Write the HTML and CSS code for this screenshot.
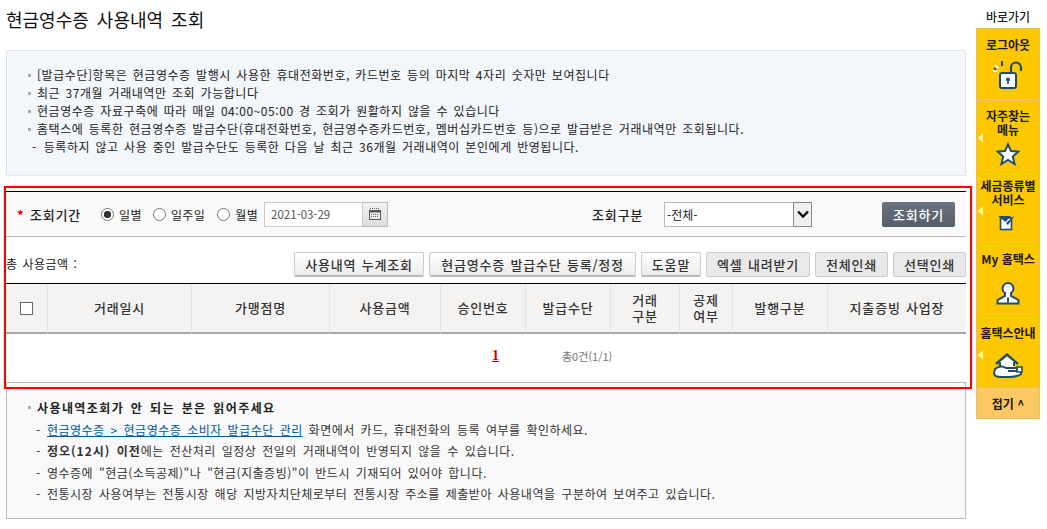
FILE: index.html
```html
<!DOCTYPE html>
<html lang="ko">
<head>
<meta charset="utf-8">
<title>현금영수증 사용내역 조회</title>
<link rel="stylesheet" href="styles.css">
</head>
<body>
<div class="page">
  <main class="main">
    <h1 class="title">현금영수증 사용내역 조회</h1>
    <section class="info">
      <ul class="bullets">
        <li>[발급수단]항목은 현금영수증 발행시 사용한 휴대전화번호, 카드번호 등의 마지막 4자리 숫자만 보여집니다</li>
        <li>최근 37개월 거래내역만 조회 가능합니다</li>
        <li>현금영수증 자료구축에 따라 매일 04:00~05:00 경 조회가 원활하지 않을 수 있습니다</li>
        <li>홈택스에 등록한 현금영수증 발급수단(휴대전화번호, 현금영수증카드번호, 멤버십카드번호 등)으로 발급받은 거래내역만 조회됩니다.</li>
      </ul>
      <p class="info-sub"><span>-</span><span>등록하지 않고 사용 중인 발급수단도 등록한 다음 날 최근 36개월 거래내역이 본인에게 반영됩니다.</span></p>
    </section>

    <form class="search">
      <span class="star">*</span>
      <span class="label period-label">조회기간</span>
      <label class="radio"><input type="radio" name="period" checked>일별</label>
      <label class="radio"><input type="radio" name="period">일주일</label>
      <label class="radio"><input type="radio" name="period">월별</label>
      <span class="date">
        <input class="date-input" type="text" value="2021-03-29">
        <button class="cal" type="button" aria-label="달력">
          <svg width="12" height="12" viewBox="0 0 12 12"><path d="M1 .5h1M3 .5h1M5 .5h1M7 .5h1M9 .5h1" stroke="#666" fill="none"/><rect x=".5" y="2.500" width="11" height="9" fill="#eee" stroke="#555"/><rect x="0" y="2" width="12" height="2.500" fill="#555"/><path d="M2 6.500h8M2 8.500h8" stroke="#666" stroke-dasharray="1 1" fill="none"/></svg>
        </button>
      </span>
      <span class="label kind-label">조회구분</span>
      <span class="select">
        <select class="select-el"><option>-전체-</option></select>
        <span class="select-arrow"><svg width="12" height="9" viewBox="0 0 12 9"><path d="M1 1.500 6 6.500 11 1.500" fill="none" stroke="#111" stroke-width="2.400"/></svg></span>
      </span>
      <button class="search-btn" type="button">조회하기</button>
    </form>

    <div class="toolbar">
      <span class="total">총 사용금액 :</span>
      <div class="tools">
        <button class="btn btn-a w130" type="button">사용내역 누계조회</button>
        <button class="btn btn-a w207" type="button">현금영수증 발급수단 등록/정정</button>
        <button class="btn btn-a w60" type="button">도움말</button>
        <button class="btn btn-b w104" type="button">엑셀 내려받기</button>
        <button class="btn btn-b w73" type="button">전체인쇄</button>
        <button class="btn btn-b w73" type="button">선택인쇄</button>
      </div>
    </div>

    <table class="grid">
      <colgroup>
        <col class="c1"><col class="c2"><col class="c3"><col class="c4"><col class="c5"><col class="c6"><col class="c7"><col class="c8"><col class="c9"><col class="c10">
      </colgroup>
      <thead>
        <tr>
          <th><input class="check" type="checkbox"></th>
          <th>거래일시</th>
          <th>가맹점명</th>
          <th>사용금액</th>
          <th>승인번호</th>
          <th>발급수단</th>
          <th>거래<br>구분</th>
          <th>공제<br>여부</th>
          <th>발행구분</th>
          <th>지출증빙 사업장</th>
        </tr>
      </thead>
    </table>

    <div class="pager">
      <a class="page-no" href="#">1</a>
      <span class="page-count">총0건(1/1)</span>
    </div>

    <section class="help">
      <h2 class="help-title">사용내역조회가 안 되는 분은 읽어주세요</h2>
      <ul class="dashes">
        <li><a class="link" href="#">현금영수증 &gt; 현금영수증 소비자 발급수단 관리</a> 화면에서 카드, 휴대전화의 등록 여부를 확인하세요.</li>
        <li><b class="strong">정오(12시) 이전</b>에는 전산처리 일정상 전일의 거래내역이 반영되지 않을 수 있습니다.</li>
        <li>영수증에 "현금(소득공제)"나 "현금(지출증빙)"이 반드시 기재되어 있어야 합니다.</li>
        <li>전통시장 사용여부는 전통시장 해당 지방자치단체로부터 전통시장 주소를 제출받아 사용내역을 구분하여 보여주고 있습니다.</li>
      </ul>
    </section>

    <div class="highlight" aria-hidden="true"></div>
  </main>

  <aside class="side">
    <div class="side-title">바로가기</div>
    <nav class="side-box">
      <a class="side-item i1" href="#">
        <span class="side-text">로그아웃</span>
        <svg class="ico" width="36" height="30" viewBox="0 0 36 30">
          <path d="M3 11h4M5 5l3 3" stroke="#fff" stroke-width="2" fill="none"/>
          <path d="M4 8l2 2" stroke="#1d4f76" stroke-width="2" fill="none"/>
          <path d="M12 1v5" stroke="#1d4f76" stroke-width="2" fill="none"/>
          <path d="M21 13V7.500a5 5 0 0 1 10 0V11" stroke="#1d4f76" stroke-width="2.200" fill="none"/>
          <rect x="10" y="13" width="16" height="15" rx="2" fill="#fff" stroke="#1d4f76" stroke-width="2"/>
          <circle cx="18" cy="19.500" r="2" fill="#1d4f76"/><path d="M18 20v4" stroke="#1d4f76" stroke-width="1.600"/>
        </svg>
      </a>
      <a class="side-item i2 has-arrow" href="#">
        <span class="side-text">자주찾는<br>메뉴</span>
        <svg class="ico" width="24" height="24" viewBox="0 0 24 24"><path d="M12 2.500 15 9l7.300.6-5.500 5 1.800 7.400L12 18l-6.600 4 1.800-7.400-5.500-5L9 9z" fill="#fff" stroke="#1d4f76" stroke-width="2"/></svg>
      </a>
      <a class="side-item i3 has-arrow" href="#">
        <span class="side-text">세금종류별<br>서비스</span>
        <svg class="ico" width="20" height="16" viewBox="0 0 20 16"><rect x="2.500" y="3" width="11" height="11.500" fill="#fff" stroke="#1d4f76" stroke-width="1.600"/><path d="M0 1h13l-5.500 6z" fill="#1d4f76"/><path d="M5 5l3 3 9-8-7 10z" fill="#1d4f76"/></svg>
      </a>
      <a class="side-item i4" href="#">
        <span class="side-text">My 홈택스</span>
        <svg class="ico" width="24" height="24" viewBox="0 0 24 24"><circle cx="12" cy="7.500" r="5.500" fill="#fff" stroke="#1d4f76" stroke-width="2"/><path d="M9 12v3L1.500 19v3.500h21V19L15 15v-3" fill="#fff" stroke="#1d4f76" stroke-width="2"/><path d="M12 16.500v5" stroke="#1d4f76" stroke-width="2"/></svg>
      </a>
      <a class="side-item i5 has-arrow" href="#">
        <span class="side-text">홈택스안내</span>
        <svg class="ico" width="30" height="26" viewBox="0 0 30 26"><path d="M3 11 14 1.500 25 11" fill="none" stroke="#1d4f76" stroke-width="2.400"/><path d="M7 9v7h14V9L14 4z" fill="#fff"/><path d="M7 9v6M21 9v4" stroke="#1d4f76" stroke-width="2"/><path d="M2 16c4-3 8-3 11-1h10c1.500 0 1.500 3 0 3h-8 13v3c-4 3-8 3-12 3H8c-3 0-7-1-7-4z" fill="#fff" stroke="#1d4f76" stroke-width="2"/><path d="M24 14h5v5h-5z" fill="#fff" stroke="#1d4f76" stroke-width="1.600"/></svg>
      </a>
      <a class="side-fold" href="#">접기 ^</a>
    </nav>
  </aside>
</div>
</body>
</html>
```

FILE: styles.css
```css
* { box-sizing: border-box; }
html, body { margin: 0; padding: 0; background: #fff; overflow: hidden; }
body { font-family: "Noto Sans CJK KR", "Noto Sans", sans-serif; font-size: 12px; color: #333; }
a { color: inherit; text-decoration: none; }
ul { list-style: none; margin: 0; padding: 0; }
p, h1, h2 { margin: 0; }
button, input, select { font-family: inherit; font-size: inherit; margin: 0; }

.page { display: flex; width: 1047px; height: 529px; padding-left: 6px; }
.main { position: relative; width: 960px; }

.title { height: 50px; padding-top: 6px; font-size: 18px; line-height: 27px; font-weight: 400; color: #111; word-spacing: 3px; }

.info { height: 126px; padding: 15px 20px; background: #f3f6fa; border: 1px solid #dfe6ec; color: #222; line-height: 18px; letter-spacing: .55px; word-spacing: 1.500px; }
.bullets li { position: relative; padding-left: 10px; }
.bullets li::before { content: ""; position: absolute; left: 1px; top: 8px; width: 3px; height: 3px; background: #aaa; }
.info-sub { display: flex; gap: 7px; padding-left: 5px; }

.search { display: flex; align-items: center; height: 46px; margin-top: 15px; padding-left: 11px; background: #f9f9f9; border-top: 1px solid #000; border-bottom: 1px solid #bbb; }
.star { width: 13px; color: #d00; font-weight: 700; font-size: 13px; line-height: 13px; }
.label { font-size: 13px; font-weight: 500; letter-spacing: .8px; color: #222; }
.period-label { width: 71px; }
.radio { display: flex; align-items: center; gap: 5px; margin-right: 11px; font-size: 12px; letter-spacing: .4px; color: #222; }
.radio:nth-of-type(2) { margin-right: 12px; }
.radio:nth-of-type(3) { margin-right: 6px; }
.radio input { appearance: none; width: 13px; height: 13px; margin: 0; border: 1px solid #777; border-radius: 50%; background: #fff; }
.radio input:checked { background: radial-gradient(circle, #333 0 3.400px, #fff 4px); }
.date { display: flex; height: 25px; }
.date-input { width: 99px; height: 25px; padding: 0 6px; border: 1px solid #ccc; background: #fff; color: #555; font-size: 11.500px; outline: 0; }
.cal { display: flex; align-items: center; justify-content: center; width: 25px; height: 25px; padding: 0; border: 1px solid #bbb; border-left: 0; background: linear-gradient(#f2f2f2, #ddd); }
.kind-label { margin-left: 204px; width: 72px; }
.select { position: relative; display: block; width: 148px; height: 25px; }
.select-el { appearance: none; display: block; width: 100%; height: 100%; padding: 0 0 0 2px; border: 1px solid #bbb; border-radius: 0; background: #fff; color: #222; font-size: 12px; }
.select-arrow { position: absolute; right: 0; top: 0; bottom: 0; width: 19px; display: flex; align-items: center; justify-content: center; background: #f0f0f0; border: 1px solid #888; }
.search-btn { width: 73px; height: 25px; margin-left: 70px; padding: 0; border: 0; border-radius: 2px; background: linear-gradient(#6b7280, #555c6a); color: #fff; font-size: 13px; font-weight: 500; letter-spacing: .8px; }

.toolbar { display: flex; align-items: flex-start; justify-content: space-between; height: 47px; padding-top: 15px; border-bottom: 1px solid #000; }
.total { padding-top: 3px; color: #222; letter-spacing: .5px; word-spacing: 1px; }
.tools { display: flex; gap: 5px; }
.btn { height: 25px; padding: 0; border: 1px solid #ccc; border-radius: 2px; color: #333; font-size: 13px; font-weight: 500; letter-spacing: .8px; word-spacing: 1px; }
.btn-a { background: linear-gradient(#fff, #ececec); border-bottom: 2px solid #bbb; }
.btn-b { background: #e9e9e9; }
.w130 { width: 130px; } .w207 { width: 207px; } .w60 { width: 60px; } .w104 { width: 104px; } .w73 { width: 73px; }

.grid { width: 960px; table-layout: fixed; border-collapse: separate; border-spacing: 0; }
.c1 { width: 42px; } .c2 { width: 144px; } .c3 { width: 138px; } .c4 { width: 111px; } .c5 { width: 85px; }
.c6 { width: 85px; } .c7 { width: 69px; } .c8 { width: 53px; } .c9 { width: 95px; } .c10 { width: 138px; }
.grid th { height: 50px; padding: 0; background: #f4f3f2; border-right: 1px solid #e4e4e4; border-bottom: 2px solid #a8a8a8; color: #333; font-size: 13px; font-weight: 500; letter-spacing: .8px; word-spacing: 1px; line-height: 16px; }
.grid th:last-child { border-right: 0; }
.check { appearance: none; display: block; width: 13px; height: 13px; margin: 0 0 0 14px; border: 1px solid #666; background: #fff; }

.pager { display: flex; align-items: center; gap: 63px; height: 48px; padding: 0 0 4px 486px; }
.page-no { color: #c00; font-family: "Liberation Serif", serif; font-weight: 700; font-size: 14px; text-decoration: underline; }
.page-count { color: #777; font-size: 11px; }

.help { height: 137px; padding: 13px 20px; background: #f9f9f9; border: 1px solid #bbb; color: #333; line-height: 21.300px; letter-spacing: .5px; word-spacing: 2px; }
.help-title { position: relative; padding-left: 10px; font-size: 12px; font-weight: 700; letter-spacing: 1.400px; color: #222; line-height: 23px; }
.help-title::before { content: ""; position: absolute; left: 1px; top: 10px; width: 3px; height: 3px; background: #aaa; }
.dashes li { padding-left: 20px; position: relative; }
.dashes li::before { content: "-"; position: absolute; left: 9px; }
.link { color: #005a9c; text-decoration: underline; }
.strong { font-weight: 700; letter-spacing: 1px; color: #333; }

.highlight { position: absolute; left: -2px; top: 186px; width: 968px; height: 203px; border: 2px solid #f00; box-shadow: 0 0 1px #f66; pointer-events: none; }

.side { width: 64px; margin-left: 10px; }
.side-title { height: 28px; padding-top: 9px; text-align: center; font-size: 12px; font-weight: 500; line-height: 16px; color: #222; }
.side-box { display: flex; flex-direction: column; }
.side-item { position: relative; display: flex; flex-direction: column; align-items: center; background: #fdc800; border: 1px solid #e8c058; border-width: 1px 1px 0; color: #1a1a1a; }
.i1 { height: 72px; padding-top: 9px; gap: 8px; }
.i2 { height: 73px; padding-top: 8px; gap: 5px; }
.i3 { height: 72px; padding-top: 5px; gap: 8px; }
.i4 { height: 72px; padding-top: 6px; gap: 15px; }
.i5 { height: 70px; padding-top: 8px; gap: 13px; }
.side-text { text-align: center; font-size: 12px; font-weight: 700; line-height: 14px; white-space: nowrap; }
.ico { display: block; flex: none; }
.has-arrow::before { content: ""; position: absolute; left: 1px; top: 32px; border: 5px solid transparent; border-left: 0; border-right: 5px solid #fff0a0; }
.side-fold { display: flex; align-items: center; justify-content: center; height: 32px; background: #fdc864; border: 1px solid #d6c85e; font-size: 12px; font-weight: 700; color: #1a1a1a; }
```
